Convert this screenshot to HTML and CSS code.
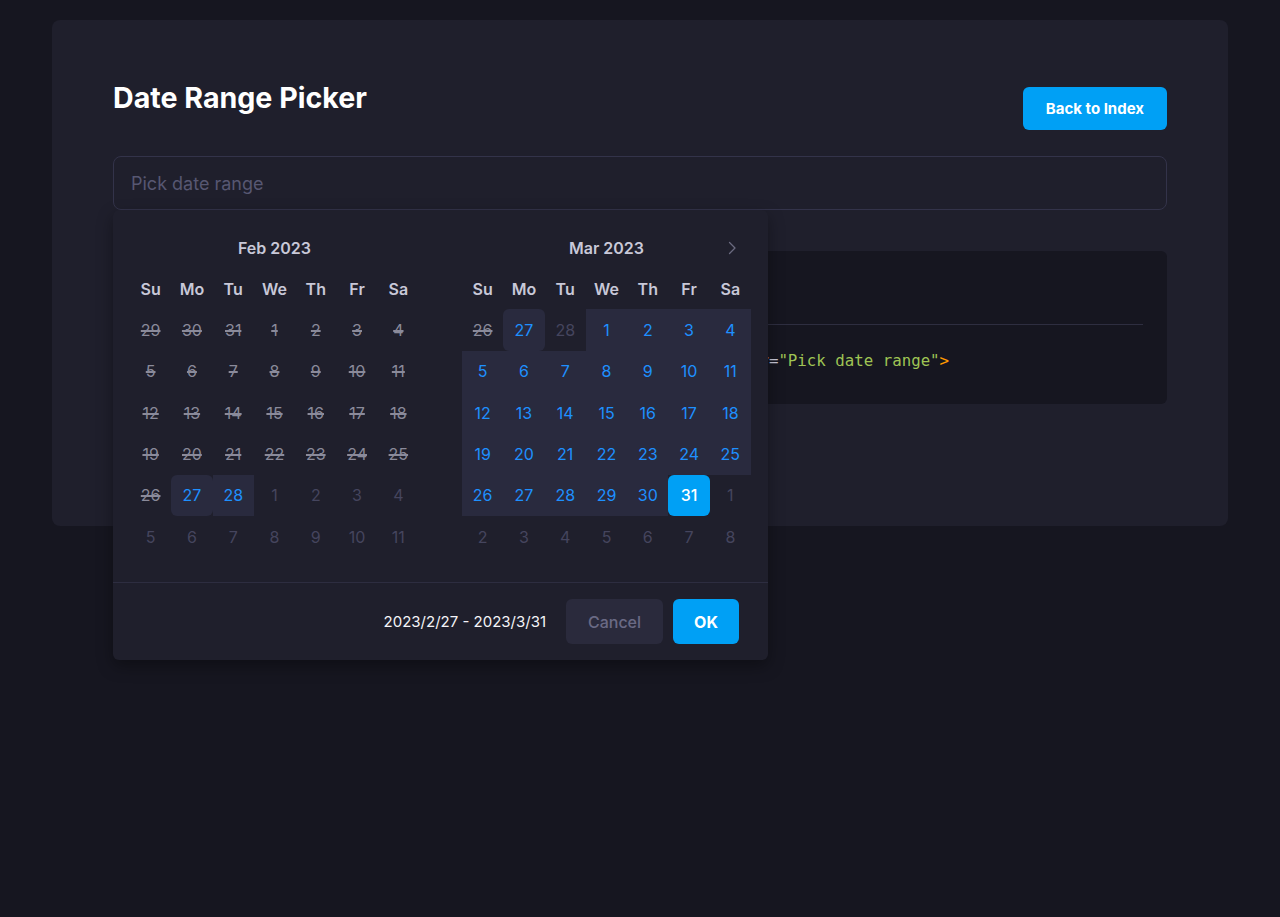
FILE: index.html
```html
<!DOCTYPE html>
<html lang="en">
<head>
<meta charset="utf-8">
<title>Date Range Picker</title>
<link rel="stylesheet" href="styles.css">
</head>
<body>
<main class="card">
  <header class="head">
    <h1 class="title">Date Range Picker</h1>
    <button class="btn-primary">Back to Index</button>
  </header>

  <div class="picker">
    <div class="input">Pick date range</div>

    <div class="popup">
      <div class="panels">
        <section class="cal">
          <div class="cal-head"><span></span><span class="month">Feb 2023</span><span></span></div>
          <div class="grid">
            <span class="wd">Su</span><span class="wd">Mo</span><span class="wd">Tu</span><span class="wd">We</span><span class="wd">Th</span><span class="wd">Fr</span><span class="wd">Sa</span>
            <span class="d off">29</span><span class="d off">30</span><span class="d off">31</span><span class="d off">1</span><span class="d off">2</span><span class="d off">3</span><span class="d off">4</span>
            <span class="d off">5</span><span class="d off">6</span><span class="d off">7</span><span class="d off">8</span><span class="d off">9</span><span class="d off">10</span><span class="d off">11</span>
            <span class="d off">12</span><span class="d off">13</span><span class="d off">14</span><span class="d off">15</span><span class="d off">16</span><span class="d off">17</span><span class="d off">18</span>
            <span class="d off">19</span><span class="d off">20</span><span class="d off">21</span><span class="d off">22</span><span class="d off">23</span><span class="d off">24</span><span class="d off">25</span>
            <span class="d off">26</span><span class="d start">27</span><span class="d in">28</span><span class="d dim">1</span><span class="d dim">2</span><span class="d dim">3</span><span class="d dim">4</span>
            <span class="d dim">5</span><span class="d dim">6</span><span class="d dim">7</span><span class="d dim">8</span><span class="d dim">9</span><span class="d dim">10</span><span class="d dim">11</span>
          </div>
        </section>
        <section class="cal">
          <div class="cal-head"><span></span><span class="month">Mar 2023</span>
            <span class="nav"><svg width="12" height="14" viewBox="0 0 12 14"><path d="M3.5 1.5 L9 7 L3.5 12.5" fill="none" stroke="#6b6b80" stroke-width="1.3" stroke-linecap="round" stroke-linejoin="round"/></svg></span>
          </div>
          <div class="grid">
            <span class="wd">Su</span><span class="wd">Mo</span><span class="wd">Tu</span><span class="wd">We</span><span class="wd">Th</span><span class="wd">Fr</span><span class="wd">Sa</span>
            <span class="d off">26</span><span class="d start">27</span><span class="d dim">28</span><span class="d in">1</span><span class="d in">2</span><span class="d in">3</span><span class="d in">4</span>
            <span class="d in">5</span><span class="d in">6</span><span class="d in">7</span><span class="d in">8</span><span class="d in">9</span><span class="d in">10</span><span class="d in">11</span>
            <span class="d in">12</span><span class="d in">13</span><span class="d in">14</span><span class="d in">15</span><span class="d in">16</span><span class="d in">17</span><span class="d in">18</span>
            <span class="d in">19</span><span class="d in">20</span><span class="d in">21</span><span class="d in">22</span><span class="d in">23</span><span class="d in">24</span><span class="d in">25</span>
            <span class="d in">26</span><span class="d in">27</span><span class="d in">28</span><span class="d in">29</span><span class="d in">30</span><span class="d end">31</span><span class="d dim">1</span>
            <span class="d dim">2</span><span class="d dim">3</span><span class="d dim">4</span><span class="d dim">5</span><span class="d dim">6</span><span class="d dim">7</span><span class="d dim">8</span>
          </div>
        </section>
      </div>
      <footer class="pfoot">
        <span class="range">2023/2/27 - 2023/3/31</span>
        <button class="btn-cancel">Cancel</button>
        <button class="btn-ok">OK</button>
      </footer>
    </div>
  </div>

  <div class="code">
    <div class="code-head"></div>
    <pre class="code-body"><span class="c-tag">&lt;DatePicker</span> <span class="c-attr">v-model</span><span class="c-eq">=</span><span class="c-str">"range"</span> <span class="c-attr">type</span><span class="c-eq">=</span><span class="c-str">"daterange"</span> <span class="c-attr">clearable placeholder</span><span class="c-eq">=</span><span class="c-str">"Pick date range"</span><span class="c-br">&gt;</span></pre>
  </div>
</main>
</body>
</html>
```

FILE: styles.css
```css
* { box-sizing: border-box; }

body {
  margin: 0;
  background: #161620;
  font-family: Inter, "Noto Sans", sans-serif;
  color: #e8e8f0;
  min-height: 917px;
}

.card {
  width: 1176px;
  margin: 20px auto 0;
  background: #1f1f2c;
  border-radius: 8px;
  padding: 60px 61px 122px;
}

.head {
  display: flex;
  align-items: center;
  justify-content: space-between;
}

.title {
  margin: 0 0 20px;
  font-size: 28.6px;
  line-height: 36px;
  font-weight: 700;
  color: #ffffff;
}

.btn-primary {
  height: 43px;
  padding: 0 23px;
  border: 0;
  border-radius: 6px;
  background: #00a0f5;
  color: #fff;
  font-family: inherit;
  font-size: 15px;
  font-weight: 700;
}

.picker {
  position: relative;
  margin-top: 20px;
}

.input {
  height: 54px;
  border: 1px solid #33334a;
  border-radius: 8px;
  padding: 0 17px;
  display: flex;
  align-items: center;
  font-size: 18px;
  color: #575772;
}

.popup {
  position: absolute;
  top: 100%;
  left: 0;
  width: 655px;
  background: #1f1f2c;
  border-radius: 6px;
  box-shadow: 0 6px 16px rgba(0, 0, 0, 0.35);
  z-index: 5;
}

.panels {
  display: flex;
  gap: 43px;
  padding: 17px 17px 25px;
}

.cal {
  width: 289px;
}

.cal-head {
  display: grid;
  grid-template-columns: 41.3px 1fr 41.3px;
  height: 41px;
  align-items: center;
}

.month {
  text-align: center;
  font-size: 16px;
  font-weight: 600;
  color: #c8c8d8;
}

.nav {
  display: flex;
  justify-content: center;
  padding-left: 3px;
}

.nav svg { display: block; }

.grid {
  display: grid;
  grid-template-columns: repeat(7, 1fr);
  grid-auto-rows: 41.33px;
}

.wd, .d {
  display: flex;
  align-items: center;
  justify-content: center;
  font-size: 16px;
  line-height: 20px;
}

.wd {
  font-weight: 600;
  color: #c8c8d8;
}

.d { color: #c8c8d8; }

.d.off {
  color: #8a8a9a;
  text-decoration: line-through;
  text-decoration-thickness: 1.5px;
}

.d.dim { color: #45455e; }

.d.in {
  background: #292a3e;
  color: #1e90ff;
}

.d.start {
  background: #292a3e;
  color: #1e90ff;
  border-radius: 6px;
}

.d.end {
  background: #00a0f5;
  color: #ffffff;
  font-weight: 500;
  border-radius: 6px;
}

.pfoot {
  display: flex;
  align-items: center;
  justify-content: flex-end;
  gap: 10px;
  border-top: 1px solid #2d2d40;
  padding: 16px 29px 16px;
}

.range {
  margin-right: 10px;
  font-size: 15px;
  font-weight: 400;
  color: #f4f4f8;
}

.btn-cancel, .btn-ok {
  height: 45px;
  border: 0;
  border-radius: 6px;
  font-family: inherit;
  font-size: 16px;
}

.btn-cancel {
  width: 97px;
  background: #2a2a3c;
  color: #6a6a85;
  font-weight: 500;
}

.btn-ok {
  width: 66px;
  background: #00a0f5;
  color: #fff;
  font-weight: 700;
}

.code {
  margin-top: 41px;
  background: #161620;
  border-radius: 6px;
  height: 153px;
}

.code-head {
  height: 74px;
  margin: 0 24px;
  border-bottom: 1px solid #2e2e40;
}

.code-body {
  margin: 0;
  padding: 26px 30px 0;
  font-family: "DejaVu Sans Mono", "Liberation Mono", monospace;
  font-size: 15.75px;
  line-height: 20px;
  color: #c8c8d8;
  white-space: pre;
}

.c-tag { color: #e06c75; }
.c-attr { color: #d19a66; }
.c-eq { color: #c8c8d8; }
.c-str { color: #9fc454; }
.c-br { color: #ff9800; }
```
